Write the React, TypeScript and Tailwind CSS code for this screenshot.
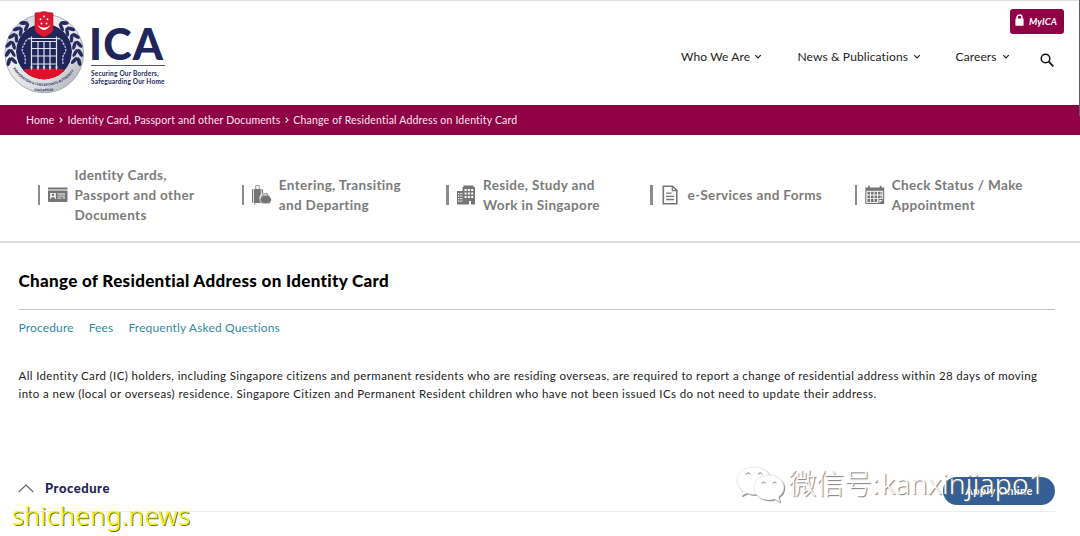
import React from "react";

const leafAngles = [-104, -90, -76, -62, -48, -34];

function Crest() {
  return (
    <svg viewBox="0 0 90 100" className="absolute left-0 top-0 h-[100px] w-[90px]">
      <defs>
        <linearGradient id="silver" x1="0" y1="0" x2="1" y2="1">
          <stop offset="0" stopColor="#b9bdc4" />
          <stop offset="0.35" stopColor="#eceef0" />
          <stop offset="0.7" stopColor="#d9dbdf" />
          <stop offset="1" stopColor="#9b9ea6" />
        </linearGradient>
        <clipPath id="disc"><circle cx="44" cy="51.500" r="28" /></clipPath>
        <path id="arcA" d="M13 68.500 A36.800 36.800 0 0 0 76 68" />
        <path id="arcB" d="M30 90.500 Q44 92.500 60 90" />
      </defs>
      <circle cx="44.300" cy="53.500" r="39.300" fill="url(#silver)" stroke="#a2a5ad" strokeWidth="0.9" />
      <g clipPath="url(#disc)">
        <circle cx="44" cy="51.500" r="28" fill="#20265a" />
        <path d="M14 72 Q27 68.500 33 68.500 L56 68.500 Q62 69 75 72 V84 H14Z" fill="#df1029" />
      </g>
      <g fill="#252b5e">
        {leafAngles.map((a) => (
          <g key={a}>
            <g transform={`rotate(${a} 44 53)`}>
              <ellipse cx="44" cy="16.800" rx="4.400" ry="1.900" transform="rotate(30 44 16.800)" />
              <ellipse cx="44" cy="21.800" rx="4.400" ry="1.700" transform="rotate(-30 44 21.800)" />
            </g>
            <g transform={`rotate(${-a} 44 53)`}>
              <ellipse cx="44" cy="16.800" rx="4.400" ry="1.900" transform="rotate(-30 44 16.800)" />
              <ellipse cx="44" cy="21.800" rx="4.400" ry="1.700" transform="rotate(30 44 21.800)" />
            </g>
          </g>
        ))}
      </g>
      <g stroke="#dfe5f0" strokeWidth="1.2" fill="none">
        <path d="M29 38.500H59M31 41.500H57M31 48.500H57M31 56H57M31 64H57" />
        <path d="M31.500 36.500V67M38 41V68M44 41V68M50 41V68M56.500 36.500V67" />
      </g>
      <g fill="#dfe5f0">
        {[31.5, 38, 44, 50, 56.5].map((x) => (
          <path key={x} d={`M${x - 1.4} 66.500h2.800l-1.400 4z`} />
        ))}
      </g>
      <g fill="none" stroke="#c3cad9" strokeWidth="1.3" strokeDasharray="2.4 1">
        <path d="M30 38.500Q26 39 25 43Q20 50 24 54Q26 58 25 64" />
        <path d="M58 38.500Q62 39 63 43Q68 50 64 54Q62 58 63 64" />
      </g>
      <path d="M35 13 Q39.500 12.500 44 11.500 Q48.500 12.500 53 13 V30 Q52 33.500 44 37 Q36 33.500 35 30Z" fill="#dc1730" stroke="#b51328" strokeWidth="0.6" />
      <path d="M37.500 25 Q44 35 50.500 25 Q44 30.500 37.500 25Z" fill="#fff" />
      <g fill="#fff">
        <circle cx="44" cy="16.500" r="0.95" />
        <circle cx="40.500" cy="19.300" r="0.95" />
        <circle cx="47.500" cy="19.300" r="0.95" />
        <circle cx="41.500" cy="23.500" r="0.95" />
        <circle cx="46.500" cy="23.500" r="0.95" />
      </g>
      <g fill="#30355c" fontFamily="Lato, sans-serif" fontWeight="900">
        <text fontSize="3.500" textLength="72" lengthAdjust="spacingAndGlyphs"><textPath href="#arcA">IMMIGRATION &amp; CHECKPOINTS AUTHORITY</textPath></text>
        <text fontSize="3.400"><textPath href="#arcB" startOffset="4.500">SINGAPORE</textPath></text>
      </g>
    </svg>
  );
}

const Chevron = ({ className }: { className: string }) => (
  <svg viewBox="0 0 8 6" className={className} fill="none" stroke="currentColor" strokeWidth="1.1">
    <path d="M1.200 1.200 4 4 6.800 1.200" />
  </svg>
);

const Crumb = () => (
  <svg viewBox="0 0 4 6" className="mx-[4.500px] h-[6px] w-[4px] -translate-y-px" fill="none" stroke="white" strokeWidth="1.100">
    <path d="M.7.6 3.100 3 .7 5.400" />
  </svg>
);

const CardIcon = () => (
  <svg viewBox="0 0 20 20" className="size-5">
    <path fill="#757575" d="M0 2.500h19.500v2H0zM0 5.500h19.500V16q0 1-1 1H1q-1 0-1-1z" />
    <path fill="#fff" d="M2.200 8h5.600v6H2.200zM9.500 8.500h7.500v1H9.500zM9.500 10.700h7.500v.8H9.500zM9.500 12.700h4v.8h-4zM15 12.500h2v1h-2z" />
    <circle cx="5" cy="9.900" r="1.300" fill="#757575" />
    <path fill="#757575" d="M2.800 14q0-2 2.200-2t2.200 2z" />
  </svg>
);
const BagIcon = () => (
  <svg viewBox="0 0 20 20" className="size-5" fill="#757575">
    <path d="M3.400 4V1.100q0-.8.8-.8h2.600q.8 0 .8.800V4h-.8V1.100H4.200V4zM0 5q0-1 1-1v14q-1 0-1-1zM1.800 4h7v5.400q-1.500 1.500-1.300 4.600 0 2.600 1.500 4H1.800zM9.600 4q1.400 0 1.400 1v3.300l-1.400.5zM2 18.400h1.400v1H2z" />
    <path d="M10.500 10.500V9.500Q10.500 8.300 11.700 8.300h3q1.200 0 1.200 1.200v1h-.8V9.100h-3.800v1.400z" />
    <path d="M9 10.500q1.500-1 4.300-1 3.500 0 4.500 1.300l.6 1.700H8.400z" opacity=".55" />
    <ellipse cx="13.700" cy="14.500" rx="5.500" ry="3.700" />
    <path d="M8.300 15.500 9.500 18.500H18l1.300-3z" opacity=".7" />
  </svg>
);
const BuildingIcon = () => (
  <svg viewBox="0 0 20 20" className="size-5">
    <path fill="#757575" d="M7.500 .5h10V2H19v17.500h-4V16h-2v3.500H1V6h5.500V2h1z" />
    <path fill="#fff" d="M8.600 4h2v2h-2zM11.900 4h2v2h-2zM15.200 4h2v2h-2zM8.600 7.500h2v2h-2zM11.900 7.500h2v2h-2zM15.200 7.500h2v2h-2zM8.600 11h2v2h-2zM11.900 11h2v2h-2zM15.200 11h2v2h-2zM2 8h1v1.200H2zM3.700 8h1v1.200h-1zM5.400 8h1v1.200h-1zM2 10.500h1v1.200H2zM3.700 10.500h1v1.200h-1zM5.400 10.500h1v1.200h-1zM2 13h1v1.200H2zM3.700 13h1v1.200h-1zM5.400 13h1v1.200h-1zM2 15.500h1v1.200H2zM3.700 15.500h1v1.200h-1zM5.400 15.500h1v1.200h-1z" />
  </svg>
);
const DocIcon = () => (
  <svg viewBox="0 0 20 20" className="size-5" fill="none" stroke="#757575" strokeWidth="1.600">
    <path d="M3.300 1.200H12.500L16.800 5.400V18.800H3.300z" />
    <path d="M12.300 1.500V5.700H16.600" strokeWidth="1.200" />
    <path d="M6.100 8.200h5.500M6.100 11.300h8M6.100 14.500h8" strokeWidth="1.300" />
  </svg>
);
const CalendarIcon = () => (
  <svg viewBox="0 0 20 20" className="size-5">
    <path fill="#757575" d="M.3 2.500H3V.8h1.800v1.700h9.900V.8h1.800v1.700h2.700V19H.3z" />
    <path fill="#fff" d="M1.400 5.800h16.700v12.100H1.400z" />
    <path fill="#757575" d="M2.500 6.700h2.600v2.800H2.500zM6 6.700h2.600v2.800H6zM9.500 6.700h2.600v2.800H9.500zM13 6.700h2.600v2.800H13zM16.300 6.700h1v2.800h-1zM2.500 10.400h2.600v2.800H2.500zM6 10.400h2.600v2.800H6zM9.500 10.400h2.600v2.800H9.500zM13 10.400h2.600v2.800H13zM16.300 10.400h1v2.800h-1zM2.500 14.100h2.600v2.800H2.500zM6 14.100h2.600v2.800H6zM9.500 14.100h2.600v2.800H9.500zM13.500 14.100h5v4.400h-5z" />
    <path fill="#fff" d="M14.400 15h3.300l-3.300 2.700z" />
  </svg>
);

const sections = [
  { icon: <CardIcon />, lines: ["Identity Cards,", "Passport and other", "Documents"] },
  { icon: <BagIcon />, lines: ["Entering, Transiting", "and Departing"] },
  { icon: <BuildingIcon />, lines: ["Reside, Study and", "Work in Singapore"] },
  { icon: <DocIcon />, lines: ["e-Services and Forms"] },
  { icon: <CalendarIcon />, lines: ["Check Status / Make", "Appointment"] },
];

export default function App() {
  return (
    <div className="relative h-[536px] w-[1080px] overflow-hidden bg-white font-['Lato',sans-serif] text-[#222]">
      <header className="relative flex h-[105px] justify-between border-t border-[#dedede]">
        <div className="relative -mt-px w-[180px]">
          <Crest />
          <div className="ml-[91px] w-[74px] pt-[24px] text-[#20265a]">
            <div className="-ml-[2px] h-[41px] whitespace-nowrap text-[43px] font-black leading-[40px] tracking-[1.200px]">ICA</div>
            <div className="h-px bg-[#50547a]" />
            <div className="mt-[4px] whitespace-nowrap text-[6.500px] font-bold leading-[7.500px] tracking-[0.2px]">
              Securing Our Borders,<br />Safeguarding Our Home
            </div>
          </div>
        </div>
        <div className="flex w-[400px] flex-col">
          <div className="mr-[16px] mt-[8px] flex h-[25px] w-[54px] items-center gap-[5px] self-end rounded-[3px] bg-[#8f0045] pl-[5px] text-white">
            <svg viewBox="0 0 9 12" className="mb-[3px] h-[12px] w-[9px]">
              <path d="M2 6V3.500a2.500 2.500 0 0 1 5 0V6" fill="none" stroke="white" strokeWidth="1.500" />
              <rect x="0.400" y="4.500" width="8.200" height="7.300" rx=".6" fill="white" />
            </svg>
            <span className="text-[9.500px] font-bold italic leading-none tracking-[0.1px]">MyICA</span>
          </div>
          <nav className="mt-[12px] flex h-[22px] items-center whitespace-nowrap pl-[1px] text-[12px] tracking-[0.12px]">
            <span className="w-[73px]">Who We Are</span><Chevron className="h-[6px] w-[8px]" />
            <span className="ml-[35.500px] w-[115px]">News &amp; Publications</span><Chevron className="h-[6px] w-[8px]" />
            <span className="ml-[35px] w-[46px]">Careers</span><Chevron className="h-[6px] w-[8px]" />
            <svg viewBox="0 0 14 14" className="ml-[30.500px] mt-[6px] size-[14px]" fill="none" stroke="#111" strokeWidth="1.500">
              <circle cx="5.500" cy="5.500" r="4.300" /><path d="m8.700 8.700 4.600 4.600" strokeWidth="1.800" />
            </svg>
          </nav>
        </div>
      </header>

      <div className="flex h-[30px] items-center whitespace-nowrap border-y border-[#7c0a43] bg-[#8f0045] pl-[26px] pt-[1px] text-[10.500px] tracking-[0.130px] text-[#fbeaf2]">
        <span>Home</span><Crumb /><span>Identity Card, Passport and other Documents</span><Crumb /><span className="tracking-[0.180px]">Change of Residential Address on Identity Card</span>
      </div>

      <nav className="grid h-[108px] grid-cols-[204.300px_204.300px_204.300px_204.300px_1fr] items-center border-b-2 border-[#dcdcdc] pl-[37.500px] pt-[14px]">
        {sections.map((s) => (
          <div key={s.lines[0]} className="flex items-center">
            <div className="h-5 w-[2.500px] bg-[#8c8c8c]" />
            <div className="ml-[7.500px]">{s.icon}</div>
            <div className="ml-[7px] whitespace-nowrap text-[13.500px] font-bold leading-5 tracking-[0.350px] text-[#7b7b7b]">
              {s.lines.map((l) => <div key={l}>{l}</div>)}
            </div>
          </div>
        ))}
      </nav>

      <main className="pl-[18.500px] pr-[25px]">
        <h1 className="flex h-[67px] items-center border-b border-[#c4c4c4] pt-[10px] text-[17px] font-black tracking-[0.320px] text-black">
          Change of Residential Address on Identity Card
        </h1>
        <div className="mt-[9px] flex h-[18px] items-center gap-[15px] text-[12px] tracking-[0.150px] text-[#338aa3]">
          <span>Procedure</span><span>Fees</span><span>Frequently Asked Questions</span>
        </div>
        <p className="mt-[30px] whitespace-nowrap text-[11.500px] leading-[18px] tracking-[0.374px] text-[#222]">
          <span>All Identity Card (IC) holders, including Singapore citizens and permanent residents who are residing overseas, are required to report a change of residential address within 28 days of moving</span><br />
          <span className="tracking-[0.386px]">into a new (local or overseas) residence. Singapore Citizen and Permanent Resident children who have not been issued ICs do not need to update their address.</span>
        </p>
        <section className="mt-[74px] flex h-[35px] items-start justify-between border-b border-[#eeeeee]">
          <div className="flex items-center pt-[1px]">
            <svg viewBox="0 0 16 9" className="-ml-[0.500px] h-[9px] w-[16px]" fill="none" stroke="#666" strokeWidth="1.200"><path d="M.7 8 8 1l7.300 7" /></svg>
            <h2 className="ml-[11px] text-[13px] font-black leading-[20px] tracking-[0.550px] text-[#251e57]">Procedure</h2>
          </div>
          <div className="flex h-[28px] w-[112px] items-center justify-center rounded-full bg-[#355f94] text-[11px] font-bold tracking-[0.300px] text-white">Apply Online</div>
        </section>
      </main>

      <div className="absolute left-[736px] top-[465px] flex items-start text-white">
        <svg viewBox="0 0 50 40" className="h-[40px] w-[50px] drop-shadow-[1px_1px_0.500px_#888]" fill="white" stroke="#d4d4d4" strokeWidth="0.500">
          <path d="M18 2C8 2 1 8 1 15.500 1 20 3.500 23.500 7 26L5.500 31 11 28Q14 29.500 18 29.500C28 29.500 35 23 35 15.500S28 2 18 2Z" />
          <path d="M33 10C24 10 18 15.500 18 22.500S24 35 33 35Q36 35 38.500 34L44 37 42.500 32Q48 28 48 22.500C48 15.500 41.500 10 33 10Z" />
          <g fill="none" stroke="#777" strokeWidth="0.9"><path d="M10.500 9.500a1.800 1.600 0 0 1 3.600 0M22.500 9.500a1.800 1.600 0 0 1 3.600 0M26 18.500a1.600 1.500 0 0 1 3.200 0M37 18.500a1.600 1.500 0 0 1 3.200 0" /></g>
        </svg>
        <div className="ml-[2.500px] whitespace-nowrap font-['Noto_Sans','Noto_Sans_CJK_SC',sans-serif] text-[28px] leading-[34px] [text-shadow:1px_1px_1px_#777]">
          <span className="font-['Noto_Sans_CJK_SC',sans-serif] font-light tracking-[-0.200px]">微信号: </span><span className="-ml-[3.500px] font-light tracking-[0.300px]">kanxinjiapo1</span>
        </div>
      </div>
      <div className="absolute left-[12px] top-[499px] whitespace-nowrap font-['Noto_Sans',sans-serif] text-[26px] font-light leading-[32px] tracking-[0.350px] text-[#f4f714] [text-shadow:1px_1px_0.500px_#6b6b20,0.400px_0_0_#f4f714]">shicheng.news</div>
      <div className="absolute right-0 top-0 h-[116px] w-px bg-[#5f5f68]" />
    </div>
  );
}
